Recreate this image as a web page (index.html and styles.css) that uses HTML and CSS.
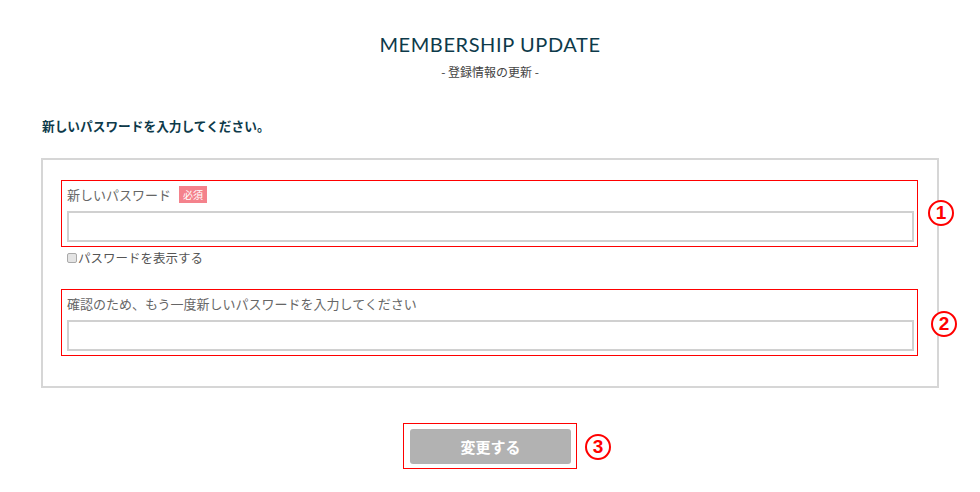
FILE: index.html
```html
<!DOCTYPE html>
<html>
 <head>
	<title>membership update</title>
	<meta charset="UTF-8"/>
	<meta name="viewport" content="width=device-width, initial-scale=1.0">
	<link rel="stylesheet" href="styles.css">
 </head>
 <body>
	<div id="cont">
		<div class="head">
			<h1>MEMBERSHIP UPDATE</h1>
			<p>- 登録情報の更新 -</p>
		</div>

		<p class="lead">新しいパスワードを入力してください。</p>

		<div class="panel">
			<div class="field">
				<div class="label">新しいパスワード <span class="req">必須</span></div>
				<input type="password" class="text">
				<span class="num one">1</span>
			</div>
			<label class="show"><span class="box"></span>パスワードを表示する</label>

			<div class="field second">
				<div class="label">確認のため、もう一度新しいパスワードを入力してください</div>
				<input type="password" class="text">
				<span class="num two">2</span>
			</div>
		</div>

		<div class="submit">
			<div class="btnwrap">
				<button class="send">変更する</button>
				<span class="num three">3</span>
			</div>
		</div>
	</div>
 </body>
</html>
```

FILE: styles.css
```css
body{
  margin: 0;
  background: #fff;
  font-family: "Noto Sans CJK JP", sans-serif;
  color: #333;
}
div#cont{
  width: 898px;
  margin: 0 auto;
}
.head{
  text-align: center;
  padding-top: 32px;
}
.head h1{
  margin: 0;
  font-family: "Lato", sans-serif;
  font-weight: 400;
  font-size: 20px;
  line-height: 24px;
  letter-spacing: 0.6px;
  color: #0d3a4a;
}
.head p{
  margin: 8px 0 0;
  font-size: 12px;
  line-height: 16px;
  color: #444;
}
p.lead{
  margin: 37px 0 0 1px;
  font-size: 12.7px;
  line-height: 18px;
  font-weight: 700;
  color: #0d3a4a;
}
.panel{
  margin-top: 23px;
  border: 2px solid #d6d6d6;
  padding: 20px 19px 30px 18px;
}
.field{
  position: relative;
  border: 1px solid #f00;
  padding: 3px 3px 4px 5px;
}
.field.second{
  margin-top: 21px;
}
.label{
  height: 22px;
  line-height: 22px;
  font-size: 13px;
  color: #666;
  margin-bottom: 5px;
}
.req{
  display: inline-block;
  margin-left: 5px;
  width: 28px;
  height: 17px;
  line-height: 17px;
  text-align: center;
  background: #f4828c;
  color: #fff;
  font-size: 10px;
  vertical-align: 1px;
}
input.text{
  display: block;
  box-sizing: border-box;
  width: 847px;
  height: 31px;
  margin: 0;
  border: 2px solid #d0d0d0;
  background: #fff;
}
label.show{
  display: flex;
  align-items: center;
  height: 21px;
  margin-left: 6px;
  font-size: 12.5px;
  color: #555;
}
.box{
  width: 8px;
  height: 8px;
  border: 1px solid #aaa;
  border-radius: 2px;
  background: #e4e4e4;
  margin-right: 1px;
}
.num{
  position: absolute;
  box-sizing: border-box;
  width: 26px;
  height: 26px;
  border: 2.5px solid #f00;
  border-radius: 50%;
  background: #fff;
  color: #f00;
  font-family: "Liberation Sans", sans-serif;
  font-weight: 700;
  font-size: 19px;
  line-height: 21px;
  text-align: center;
}
.num.one{
  right: -37px;
  top: 19px;
}
.num.two{
  right: -40px;
  top: 21px;
}
.submit{
  display: flex;
  justify-content: center;
  margin-top: 35px;
}
.btnwrap{
  position: relative;
  border: 1px solid #f00;
  padding: 5px 5px 4px 6px;
}
button.send{
  display: block;
  width: 161px;
  height: 35px;
  border: none;
  border-radius: 3px;
  background: #b2b2b2;
  color: #fff;
  font-family: "Noto Sans CJK JP", sans-serif;
  font-weight: 700;
  font-size: 15px;
}
.num.three{
  right: -35px;
  top: 10px;
}
```
